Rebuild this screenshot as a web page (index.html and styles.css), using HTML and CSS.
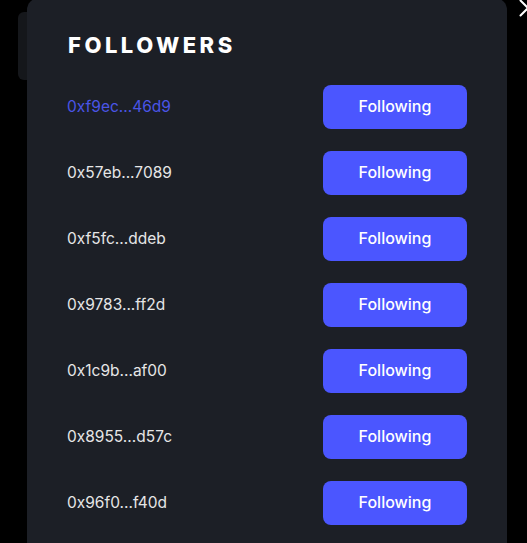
FILE: index.html
```html
<!DOCTYPE html>
<html lang="en">
<head>
  <meta charset="UTF-8">
  <meta name="viewport" content="width=device-width, initial-scale=1.0">
  <title>Followers</title>
  <link rel="stylesheet" href="styles.css">
</head>
<body>
  <div class="back-card"></div>

  <svg class="close" width="18" height="18" viewBox="0 0 18 18">
    <path d="M1.5 1.5 L16.5 16.5 M16.5 1.5 L1.5 16.5" stroke="#fff" stroke-width="2" stroke-linecap="round" fill="none"/>
  </svg>

  <div class="modal">
    <h1>FOLLOWERS</h1>
    <ul class="lista">
      <li class="item"><span class="addr active">0xf9ec...46d9</span><button>Following</button></li>
      <li class="item"><span class="addr">0x57eb...7089</span><button>Following</button></li>
      <li class="item"><span class="addr">0xf5fc...ddeb</span><button>Following</button></li>
      <li class="item"><span class="addr">0x9783...ff2d</span><button>Following</button></li>
      <li class="item"><span class="addr">0x1c9b...af00</span><button>Following</button></li>
      <li class="item"><span class="addr">0x8955...d57c</span><button>Following</button></li>
      <li class="item"><span class="addr">0x96f0...f40d</span><button>Following</button></li>
    </ul>
  </div>
</body>
</html>
```

FILE: styles.css
```css
:root {
  --bg: #000000;
  --card: #1c1f26;
  --primary: #4b56ff;
  --text: #e6e6e6;
}
* { box-sizing: border-box; margin: 0; padding: 0; }
html, body { overflow: hidden; }
body {
  font-family: 'Inter', 'Noto Sans', sans-serif;
  background: var(--bg);
  color: var(--text);
  height: 543px;
  position: relative;
}
.back-card {
  position: absolute;
  left: 18px;
  top: 12px;
  width: 20px;
  height: 68px;
  background: #15171b;
  border-radius: 6px;
}
.close {
  position: absolute;
  left: 519px;
  top: -1px;
}
.modal {
  position: relative;
  margin: -2px 0 0 27px;
  width: 480px;
  height: 545px;
  overflow: hidden;
  background: var(--card);
  border-radius: 12px 12px 0 0;
  padding: 35px 40px 0 41px;
}
h1 {
  font-size: 22px;
  line-height: 24px;
  font-weight: 800;
  letter-spacing: 3.5px;
  color: #fff;
  margin-bottom: 28px;
}
.lista {
  list-style: none;
  display: flex;
  flex-direction: column;
  gap: 22px;
}
.item {
  display: flex;
  align-items: center;
  justify-content: space-between;
  height: 44px;
}
.addr {
  font-size: 15.5px;
  color: var(--text);
  margin-left: -1px;
  margin-top: -2px;
}
.addr.active {
  color: #4a55e6;
}
button {
  width: 144px;
  height: 44px;
  border: none;
  border-radius: 8px;
  background: var(--primary);
  color: #fff;
  font-family: inherit;
  font-size: 16px;
  font-weight: 500;
  padding-bottom: 2px;
}
```
